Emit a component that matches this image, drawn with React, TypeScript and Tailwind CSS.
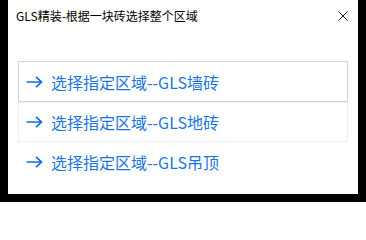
import React from "react";

const items = ["选择指定区域--GLS墙砖", "选择指定区域--GLS地砖", "选择指定区域--GLS吊顶"];

export default function App() {
  const styles = [
    "border border-[#c8d8ea] bg-white",
    "border border-[#eceff3] bg-white",
    "border border-transparent bg-white",
  ];
  return (
    <div
      className="w-[366px] h-[202px] bg-black"
      style={{ fontFamily: '"Noto Sans CJK SC", "Noto Sans", sans-serif' }}
    >
      <div className="ml-[8px] w-[350px] h-[194px] bg-white flex flex-col">
        <div className="h-[32px] flex items-center justify-between pl-[8px] pr-[10px]">
          <span className="text-[12px] text-black leading-none">GLS精装-根据一块砖选择整个区域</span>
          <svg width="10" height="10" viewBox="0 0 10 10">
            <path d="M0.5 0.5 L9.5 9.5 M9.5 0.5 L0.5 9.5" stroke="#111" strokeWidth="1" fill="none" />
          </svg>
        </div>
        <div className="flex flex-col px-[10px] pt-[29px]">
          {items.map((t, i) => (
            <div
              key={i}
              className={`${styles[i]} ${i === 0 ? "h-[41px]" : "h-[40px]"} flex items-center pl-[7px] gap-[8px] text-[16px] text-[#1a76de]`}
            >
              <svg width="17" height="12" viewBox="0 0 17 12">
                <path d="M0.5 6 H15.5 M10 0.8 L15.5 6 L10 11.2" stroke="#146cd6" strokeWidth="1.7" fill="none" />
              </svg>
              <span className="leading-none">{t}</span>
            </div>
          ))}
        </div>
      </div>
    </div>
  );
}
